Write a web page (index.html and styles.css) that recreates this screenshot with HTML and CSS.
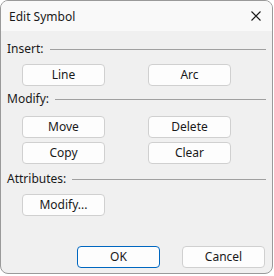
FILE: index.html
```html
<!DOCTYPE html>
<html lang="en">

<head>
    <meta charset="UTF-8">
    <meta name="viewport" content="width=device-width, initial-scale=1.0">
    <title>Edit Symbol</title>
    <link rel="stylesheet" href="styles.css">
</head>

<body>
    <div class="dialog">
        <div class="titlebar">
            <span class="title">Edit Symbol</span>
            <svg class="close" width="10" height="10" viewBox="0 0 10 10">
                <path d="M0.5 0.5 L9.5 9.5 M9.5 0.5 L0.5 9.5" stroke="#1b1b1b" stroke-width="1.1" fill="none" />
            </svg>
        </div>

        <div class="content">
            <!-- Insert -->
            <div class="group-head head-insert"><span>Insert:</span><div class="rule"></div></div>
            <div class="btn-grid grid-insert">
                <button>Line</button>
                <button>Arc</button>
            </div>

            <!-- Modify -->
            <div class="group-head head-modify"><span>Modify:</span><div class="rule"></div></div>
            <div class="btn-grid grid-modify">
                <button>Move</button>
                <button>Delete</button>
                <button>Copy</button>
                <button>Clear</button>
            </div>

            <!-- Attributes -->
            <div class="group-head head-attr"><span>Attributes:</span><div class="rule"></div></div>
            <div class="btn-grid grid-attr">
                <button>Modify...</button>
            </div>

            <div class="footer">
                <button class="default">OK</button>
                <button>Cancel</button>
            </div>
        </div>
    </div>
</body>

</html>
```

FILE: styles.css
```css
body {
    margin: 0;
    padding: 0;
    background-color: #ffffff;
    font-family: "Noto Sans", "Open Sans", sans-serif;
    font-size: 12px;
    color: #1a1a1a;
}

.dialog {
    width: 271px;
    height: 272px;
    border: 1px solid #9a9a9a;
    border-radius: 8px;
    background-color: #f0f0f0;
    overflow: hidden;
}

.titlebar {
    height: 30px;
    background-color: #f9f9f9;
    display: flex;
    align-items: center;
    justify-content: space-between;
    padding: 0 11px 0 8px;
}

.title {
    font-size: 12px;
    color: #1a1a1a;
}

.close {
    display: block;
}

.content {
    padding: 11px 6px 0 6px;
}

.group-head {
    display: flex;
    align-items: center;
    height: 14px;
    line-height: 14px;
}

.group-head span {
    margin-right: 6px;
}

.rule {
    flex: 1;
    height: 1px;
    background-color: #a0a0a0;
}

.head-modify {
    margin-top: 6px;
}

.head-attr {
    margin-top: 8px;
}

.btn-grid {
    display: grid;
    grid-template-columns: 83px 83px;
    column-gap: 43px;
    row-gap: 4px;
    padding-left: 15px;
}

.grid-insert {
    margin-top: 8px;
}

.grid-modify {
    margin-top: 10px;
}

.grid-attr {
    margin-top: 8px;
}

button {
    height: 22px;
    width: 83px;
    padding: 0;
    font-family: "Noto Sans", "Open Sans", sans-serif;
    font-size: 12px;
    color: #1a1a1a;
    background-color: #fdfdfd;
    border: 1px solid #d0d0d0;
    border-radius: 4px;
    line-height: 18px;
}

.footer {
    display: flex;
    justify-content: flex-end;
    gap: 22px;
    margin-top: 30px;
    padding-right: 1px;
}

.footer .default {
    border: 1px solid #0067c0;
}
```
